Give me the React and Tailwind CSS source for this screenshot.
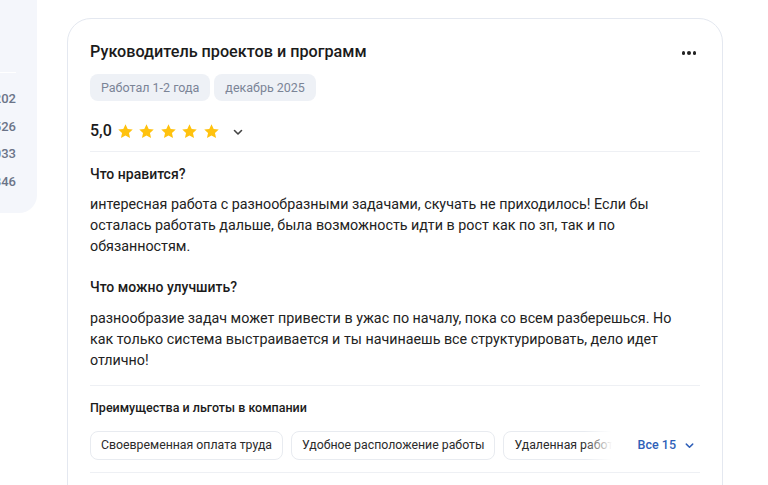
import React from "react";

const Star = () => (
  <svg width="17" height="17" viewBox="0 0 24 24" className="shrink-0">
    <path
      d="M12 1.8l3.1 6.6 7.1.8-5.3 4.9 1.5 7.1L12 17.6l-6.4 3.6 1.5-7.1L1.8 9.2l7.1-.8z"
      fill="#ffc20e"
    />
  </svg>
);

const Chevron = ({ color = "#333", size = 12 }) => (
  <svg width={size} height={size} viewBox="0 0 12 12" fill="none">
    <path d="M2.5 4.5L6 8l3.5-3.5" stroke={color} strokeWidth="1.6" strokeLinecap="round" strokeLinejoin="round" />
  </svg>
);

export default function App() {
  const nums = ["12 202", "3 526", "11 033", "5 846"];
  const chips = [
    "Своевременная оплата труда",
    "Удобное расположение работы",
    "Удаленная работа",
    "Дружный коллектив",
  ];
  return (
    <div
      className="w-[768px] h-[485px] overflow-hidden bg-white flex items-start"
      style={{ fontFamily: "Roboto, 'Noto Sans', sans-serif" }}
    >
      {/* sidebar fragment */}
      <div className="w-[37px] h-[213px] shrink-0 overflow-hidden rounded-br-[18px] bg-[#f4f6fb] pt-[72px]">
        <div className="h-px bg-[#ffffff] mr-[21px] -ml-10" />
        <div className="flex flex-col pt-[16px] gap-[8px] pr-[21px]">
          {nums.map((n) => (
            <div key={n} className="flex justify-end whitespace-nowrap text-[13px] leading-[19.5px] font-medium text-[#6b7488]">
              <span className="shrink-0">{n}</span>
            </div>
          ))}
        </div>
      </div>

      {/* card */}
      <div className="ml-[30px] mt-[18px] w-[656px] h-[520px] shrink-0 rounded-[24px] border border-[#e4e8f0] px-[22px] pt-[22px]">
        <div className="flex items-start justify-between">
          <div className="text-[16.2px] leading-[22px] font-medium text-[#1b1b1b]">
            Руководитель проектов и программ
          </div>
          <div className="flex gap-[2px] mt-[10px] mr-[4px]">
            <span className="w-[3.5px] h-[3.5px] rounded-full bg-[#222]" />
            <span className="w-[3.5px] h-[3.5px] rounded-full bg-[#222]" />
            <span className="w-[3.5px] h-[3.5px] rounded-full bg-[#222]" />
          </div>
        </div>

        <div className="flex gap-[4px] mt-[11px]">
          <span className="rounded-[8px] bg-[#eef1f6] px-[11px] py-[5px] text-[12.5px] leading-[17px] text-[#7b8496]">
            Работал 1-2 года
          </span>
          <span className="rounded-[8px] bg-[#eef1f6] px-[11px] py-[5px] text-[12.5px] leading-[17px] text-[#7b8496]">
            декабрь 2025
          </span>
        </div>

        <div className="flex items-center mt-[18px] h-[24px]">
          <span className="text-[16px] font-medium text-[#1b1b1b] mr-[5px]">5,0</span>
          <div className="flex gap-[4.5px]">
            <Star />
            <Star />
            <Star />
            <Star />
            <Star />
          </div>
          <span className="ml-[12px] mt-[1px]">
            <Chevron color="#444" />
          </span>
        </div>

        <div className="h-px bg-[#eef0f4] mt-[8px]" />

        <div className="mt-[12px] text-[14px] leading-[20px] font-medium text-[#1b1b1b]">Что нравится?</div>
        <p className="mt-[10px] text-[14.3px] leading-[21px] text-[#222] pr-[30px]">
          интересная работа с разнообразными задачами, скучать не приходилось! Если бы осталась работать дальше, была возможность идти в рост как по зп, так и по обязанностям.
        </p>

        <div className="mt-[20px] text-[14px] leading-[20px] font-medium text-[#1b1b1b]">Что можно улучшить?</div>
        <p className="mt-[11px] text-[14.3px] leading-[21px] text-[#222] pr-[20px]">
          разнообразие задач может привести в ужас по началу, пока со всем разберешься. Но как только система выстраивается и ты начинаешь все структурировать, дело идет отлично!
        </p>

        <div className="h-px bg-[#eef0f4] mt-[14px]" />

        <div className="mt-[13px] text-[12.5px] leading-[18px] font-medium text-[#1b1b1b]">
          Преимущества и льготы в компании
        </div>

        <div className="flex items-center mt-[14px]">
          <div className="relative w-[522px] shrink-0 overflow-hidden">
            <div className="flex gap-[8px] whitespace-nowrap">
              {chips.map((c) => (
                <span
                  key={c}
                  className="shrink-0 rounded-[8px] border border-[#e8ebf0] px-[10px] h-[29px] flex items-center text-[12.3px] text-[#2b2b2b]"
                >
                  {c}
                </span>
              ))}
            </div>
            <div className="absolute right-0 top-0 h-full w-[28px] bg-gradient-to-r from-transparent to-white" />
          </div>
          <button className="ml-auto flex items-center gap-[8px] pr-[5px] text-[12.5px] font-medium text-[#2f5fb8]">
            Все 15
            <Chevron color="#2f5fb8" size={11} />
          </button>
        </div>

        <div className="h-px bg-[#eef0f4] mt-[12px]" />
      </div>
    </div>
  );
}
